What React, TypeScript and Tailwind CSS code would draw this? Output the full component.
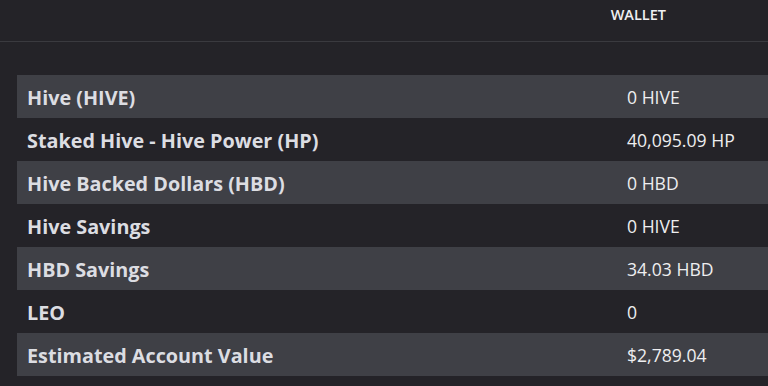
import React from "react";

const rows: [string, string][] = [
  ["Hive (HIVE)", "0 HIVE"],
  ["Staked Hive - Hive Power (HP)", "40,095.09 HP"],
  ["Hive Backed Dollars (HBD)", "0 HBD"],
  ["Hive Savings", "0 HIVE"],
  ["HBD Savings", "34.03 HBD"],
  ["LEO", "0"],
  ["Estimated Account Value", "$2,789.04"],
];

export default function App() {
  return (
    <div
      className="w-[768px] h-[386px] bg-[#242328] overflow-hidden"
      style={{ fontFamily: '"Open Sans", "Noto Sans", sans-serif' }}
    >
      <div className="h-[42px] border-b border-[#3a3a3f] flex justify-end items-start pr-[102px] pt-[4px]">
        <span className="text-[14.5px] font-semibold text-[#f0f0f2]">WALLET</span>
      </div>
      <div className="pt-[33px] pl-[17px]">
        {rows.map(([label, value], i) => (
          <div
            key={label}
            className={`flex h-[43px] items-center pt-[2px] ${i % 2 === 0 ? "bg-[#3f4046]" : "bg-[#242328]"}`}
          >
            <div className="w-[610px] pl-[10px] text-[19.8px] font-bold text-[#dcdde2]">{label}</div>
            <div className="text-[17.6px] text-[#eeeef0]">{value}</div>
          </div>
        ))}
      </div>
    </div>
  );
}
